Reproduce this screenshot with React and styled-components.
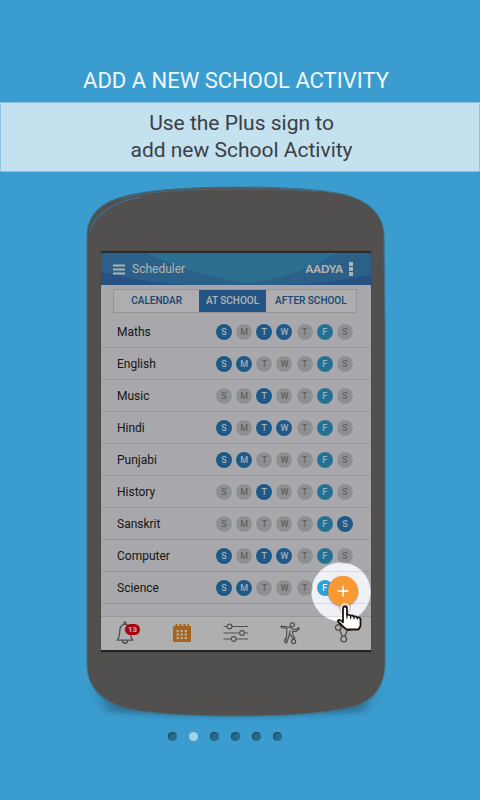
import React, { useState } from "react";
import styled, { createGlobalStyle } from "styled-components";

const GlobalStyle = createGlobalStyle`
  *, *::before, *::after { box-sizing: border-box; }
  body {
    margin: 0;
    background: #3b9dcf;
    font-family: Roboto, "Liberation Sans", sans-serif;
  }
  button { font-family: inherit; border: 0; padding: 0; background: none; cursor: pointer; }
`;

const Page = styled.main`
  min-height: 100vh;
  display: flex;
  flex-direction: column;
  padding-top: 66px;
  background: #3b9dcf;
`;

const Title = styled.h1`
  margin: 0;
  padding: 0 8px 6px 0;
  text-align: center;
  font-size: 22px;
  line-height: 30px;
  font-weight: 400;
  color: #f0f8fd;
`;

const Banner = styled.p`
  margin: 0;
  padding: 7px 0 7px 3px;
  border: 1px solid #8cc5e2;
  background: #c4e1ef;
  text-align: center;
  font-size: 21px;
  line-height: 27px;
  color: #3b4045;
  span { display: block; }
`;

const Stage = styled.div`
  display: flex;
  justify-content: center;
  padding: 14px 8px 0 0;
`;

const Phone = styled.section`
  position: relative;
  width: 100%;
  max-width: 298px;
  padding: 65px 14px 64px;
`;

const Shell = styled.svg`
  position: absolute;
  inset: 0;
  width: 100%;
  height: 100%;
  overflow: visible;
`;

const Screen = styled.div`
  position: relative;
  border-top: 2px solid #292d30;
  border-bottom: 2px solid #232528;
  background: #f0f1f6;
  box-shadow: 0 0 1px #2d2d2d;
`;

const Header = styled.header`
  position: relative;
  display: flex;
  align-items: center;
  height: 32px;
  padding: 0 18px 0 12px;
  background: #3d8bc4;
  color: #fff;
`;

const Waves = styled.svg`
  position: absolute;
  inset: 0;
  width: 100%;
  height: 100%;
`;

const HeaderButton = styled.button`
  position: relative;
  display: flex;
`;

const AppName = styled.h2`
  position: relative;
  flex: 1;
  margin: 0;
  padding-left: 7px;
  font-size: 12px;
  line-height: 16px;
  font-weight: 400;
`;

const Child = styled.span`
  position: relative;
  margin-right: 6px;
  font-family: Lato, sans-serif;
  font-size: 11px;
  line-height: 16px;
  font-weight: 900;
`;

const Tabs = styled.div`
  display: grid;
  grid-template-columns: 86fr 67fr 91fr;
  margin: 4px 14px 3px 12px;
  border: 1px solid #d5d6da;
`;

const Tab = styled.button`
  height: 22px;
  font-size: 10px;
  line-height: 22px;
  font-weight: 500;
  white-space: nowrap;
  color: ${(p) => (p.$active ? "#fff" : "#2465a8")};
  background: ${(p) => (p.$active ? "#3078bd" : "#f8f8fa")};
`;

const Subjects = styled.ul`
  margin: 0;
  padding: 0;
  list-style: none;
`;

const Subject = styled.li`
  display: flex;
  align-items: center;
  justify-content: space-between;
  height: 32px;
  padding: 0 18px 0 16px;
  border-bottom: 1px solid #d9dade;
  font-size: 12px;
  color: #222;
`;

const Days = styled.div`
  display: flex;
  justify-content: space-between;
  width: 137px;
`;

const dayColors = { on: "#2a7fc4", today: "#2fa3d6", off: "#cacdd0" };

const Day = styled.button`
  width: 16px;
  height: 16px;
  border-radius: 50%;
  font-size: 9px;
  line-height: 16px;
  font-weight: ${(p) => (p.$state === "off" ? 400 : 500)};
  color: ${(p) => (p.$state === "off" ? "#7b7f83" : "#eef6fc")};
  background: ${(p) => dayColors[p.$state]};
  box-shadow: 0 0 0 1px #f7f8fb;
`;

const Nav = styled.nav`
  display: grid;
  grid-template-columns: repeat(5, 1fr);
  height: 34px;
  margin-top: 12px;
  padding-bottom: 2px;
  border-top: 1px solid #d9dadc;
  background: #fbfbfb;
`;

const NavButton = styled.button`
  position: relative;
  display: flex;
  align-items: center;
  justify-content: center;
  &:first-child { padding-right: 6px; }
`;

const Badge = styled.span`
  position: absolute;
  top: 7px;
  left: 24px;
  width: 15px;
  height: 11px;
  border-radius: 6px;
  background: #f20010;
  color: #fff;
  font-size: 8px;
  line-height: 11px;
  font-weight: 700;
`;

const Dim = styled.div`
  position: absolute;
  inset: 0;
  pointer-events: none;
  background: radial-gradient(
    circle at calc(100% - 30px) calc(100% - 58px),
    transparent 29px,
    rgba(0, 0, 0, 0.3) 30px
  );
`;

const AddButton = styled.button`
  position: absolute;
  right: 13px;
  bottom: 44px;
  display: flex;
  align-items: center;
  justify-content: center;
  width: 30px;
  height: 30px;
  border-radius: 50%;
  background: #f89a31;
  box-shadow: 0 1px 2px rgba(60, 50, 40, 0.55);
`;

const Pointer = styled.svg`
  position: absolute;
  right: 8px;
  bottom: 19px;
  pointer-events: none;
`;

const Pager = styled.div`
  display: flex;
  align-items: center;
  justify-content: center;
  gap: 12px;
  padding: 16px 30px 16px 0;
`;

const Dot = styled.button`
  width: 9px;
  height: 9px;
  border-radius: 50%;
  background: ${(p) => (p.$active ? "#a3d3ec" : "#286a8e")};
  box-shadow: ${(p) => (p.$active ? "none" : "inset 1px 1px 1px #1b4a65")};
`;

const letters = ["S", "M", "T", "W", "T", "F", "S"];
const names = ["Sunday", "Monday", "Tuesday", "Wednesday", "Thursday", "Friday", "Saturday"];
const subjects = [
  ["Maths", [0, 2, 3]],
  ["English", [0, 1]],
  ["Music", [2]],
  ["Hindi", [0, 2, 3]],
  ["Punjabi", [0, 1]],
  ["History", [2]],
  ["Sanskrit", [6]],
  ["Computer", [0, 2, 3]],
  ["Science", [0, 1]],
];

const BellIcon = () => (
  <svg width="18" height="24" viewBox="0 0 18 24" fill="none" stroke="#6d6d6d" strokeWidth="1.3" strokeLinejoin="round">
    <path d="M8 3.5V1.8a1 1 0 0 1 2 0v1.7" />
    <path d="M9 3.3c-3.4 0-5 2.6-5.2 6.2-.2 4.5-.6 7.5-2.6 9.700h15.6c-2-2.200-2.400-5.200-2.600-9.700C14 5.900 12.400 3.300 9 3.300z" />
    <path d="M6.300 19.400c.3 3.800 5.100 3.800 5.400 0" />
  </svg>
);

const CalendarIcon = () => (
  <svg width="20" height="20" viewBox="0 0 20 20">
    <path d="M2 3h1.500V1h2v2h2V1h2v2h2V1h2v2h2V1h1.500v2H18a1 1 0 0 1 1 1v14a1 1 0 0 1-1 1H2a1 1 0 0 1-1-1V4a1 1 0 0 1 1-1z" fill="#ee8f27" />
    {[7, 10.5, 14].map((y) =>
      [4.5, 8.5, 12.5].map((x) => <rect key={x + "-" + y} x={x} y={y} width="2.5" height="2.2" fill="#fff3df" />)
    )}
  </svg>
);

const SlidersIcon = () => (
  <svg width="26" height="20" viewBox="0 0 26 20" fill="none" stroke="#747474" strokeWidth="1.2">
    <path d="M.5 3.500H4M9 3.500h16M.5 10h16M21.500 10H25M.5 16h7.800M13 16h12" />
    <circle cx="6.5" cy="3.5" r="2.4" />
    <circle cx="19" cy="10" r="2.4" />
    <circle cx="10.700" cy="16" r="2.4" />
  </svg>
);

const SportIcon = () => (
  <svg width="20" height="24" viewBox="0 0 20 24" fill="none" stroke="#707070" strokeWidth="1.2" strokeLinejoin="round" strokeLinecap="round">
    <circle cx="12.300" cy="3.800" r="2.100" />
    <path d="M1 5.200 9 6l3.500 2 3.500.6L18.800 6.500l.3 1.300-3 2.800-3.600-.4 .3 3.600 2 3.300-1.500.6L9.700 13.200 8.300 17l-1.600 5-1.800-.3L6.500 16l.2-5.500L7 7.300 1.300 6.500z" />
    <path d="M6 17 4.300 19.500M10 10l-.8 3.500" />
    <circle cx="13.500" cy="20.500" r="2.100" />
  </svg>
);

const ShareIcon = () => (
  <svg width="20" height="24" viewBox="0 0 20 24" fill="none" stroke="#747474" strokeWidth="1.4">
    <circle cx="4.200" cy="6.500" r="2.800" />
    <circle cx="15" cy="6.500" r="2.800" />
    <circle cx="9.700" cy="18" r="2.900" />
    <path d="m5.600 9 2.900 6.300M13.500 9l-2.700 6.300" />
  </svg>
);

const navItems = [
  ["Notifications", BellIcon],
  ["Calendar", CalendarIcon],
  ["Settings", SlidersIcon],
  ["Activities", SportIcon],
  ["Share", ShareIcon],
];

function DeviceShell() {
  return (
    <Shell viewBox="0 0 298 529" preserveAspectRatio="none" aria-hidden="true">
      <defs>
        <filter id="soft" x="-20%" y="-100%" width="140%" height="300%">
          <feGaussianBlur stdDeviation="7 3" />
        </filter>
      </defs>
      <path d="M10 498H288L276 525Q149 532 22 525z" fill="#255571" opacity=".65" filter="url(#soft)" />
      <path
        d="M0 50C0 28 15 15 42 9C70 3 110 1 150 1C190 1 225 3 250 7C280 12 297 28 297 50L298 135V478C297 502 284 518 255 522C225 528 190 529 149 529C105 529 65 527 42 522C15 516 0 500 0 478z"
        fill="#524f4f"
        stroke="#3f7187"
        strokeWidth="1"
      />
      <path d="M3 45C9 27 25 16 54 11" fill="none" stroke="#39799a" strokeWidth="1" />
      <path d="M32 13C65 4 110 3 160 3Q205 3 232 6" fill="none" stroke="#48697a" strokeWidth="1" />
    </Shell>
  );
}

export default function App() {
  const [tab, setTab] = useState("AT SCHOOL");
  const [page, setPage] = useState(1);
  return (
    <>
      <GlobalStyle />
      <Page>
        <Title>ADD A NEW SCHOOL ACTIVITY</Title>
        <Banner>
          <span>Use the Plus sign to</span>
          <span>add new School Activity</span>
        </Banner>
        <Stage>
          <Phone>
            <DeviceShell />
            <Screen>
              <Header>
                <Waves viewBox="0 0 270 33" preserveAspectRatio="none" aria-hidden="true">
                  <path d="M0 19Q35 29 85 33H0zM270 22Q235 31 185 33H270z" fill="#3676bb" />
                  <path d="M46 0Q85 20 145 31Q195 25 236 0z" fill="#3fa0d0" />
                </Waves>
                <HeaderButton aria-label="Menu">
                  <svg width="12" height="11" viewBox="0 0 12 11" stroke="#fff" strokeWidth="2">
                    <path d="M0 1.500h12M0 5.500h12M0 9.500h12" />
                  </svg>
                </HeaderButton>
                <AppName>Scheduler</AppName>
                <Child>AADYA</Child>
                <HeaderButton aria-label="More options">
                  <svg width="4" height="14" viewBox="0 0 4 14" fill="#fff">
                    <path d="M0 0h4v4H0zM0 5h4v4H0zM0 10h4v4H0z" />
                  </svg>
                </HeaderButton>
              </Header>
              <Tabs role="tablist">
                {["CALENDAR", "AT SCHOOL", "AFTER SCHOOL"].map((t) => (
                  <Tab key={t} role="tab" aria-selected={t === tab} $active={t === tab} onClick={() => setTab(t)}>
                    {t}
                  </Tab>
                ))}
              </Tabs>
              <Subjects>
                {subjects.map(([name, on]) => (
                  <Subject key={name}>
                    {name}
                    <Days>
                      {letters.map((l, i) => (
                        <Day
                          key={i}
                          aria-label={`${name} ${names[i]}`}
                          aria-pressed={on.includes(i)}
                          $state={i === 5 ? "today" : on.includes(i) ? "on" : "off"}
                        >
                          {l}
                        </Day>
                      ))}
                    </Days>
                  </Subject>
                ))}
              </Subjects>
              <Nav>
                {navItems.map(([label, Icon], i) => (
                  <NavButton key={label} aria-label={label}>
                    <Icon />
                    {i === 0 && <Badge>13</Badge>}
                  </NavButton>
                ))}
              </Nav>
              <Dim />
              <AddButton aria-label="Add school activity">
                <svg width="12" height="12" viewBox="0 0 12 12" stroke="#fff" strokeWidth="1.5">
                  <path d="M6 .5v11M.5 6h11" />
                </svg>
              </AddButton>
              <Pointer width="27" height="28" viewBox="0 0 27 28" aria-hidden="true">
                <circle cx="9" cy="5" r="4.300" fill="none" stroke="#fff" strokeWidth="1.5" />
                <circle cx="9" cy="5" r="5.200" fill="none" stroke="#8b8178" strokeWidth=".6" />
                <path
                  d="M7 17V5.500a2 2 0 0 1 4 0V12q2-1 3.500.8 2-.8 3.500.8 2-.6 3.200.8 2.800-.3 3.300 1.500V23l-2 3.500H10.500L7.500 24 2 18.500c-.5-2 2-2.800 5 .8z"
                  fill="#fffefa"
                  stroke="#1d1411"
                  strokeWidth="1.8"
                  strokeLinejoin="round"
                />
                <path d="M11 12v3.500M14.600 13v3M18 13.800v2.500M21.300 14.600v2" stroke="#1d1411" strokeWidth="1.2" />
              </Pointer>
            </Screen>
          </Phone>
        </Stage>
        <Pager>
          {[0, 1, 2, 3, 4, 5].map((i) => (
            <Dot key={i} aria-label={`Page ${i + 1}`} $active={i === page} onClick={() => setPage(i)} />
          ))}
        </Pager>
      </Page>
    </>
  );
}
